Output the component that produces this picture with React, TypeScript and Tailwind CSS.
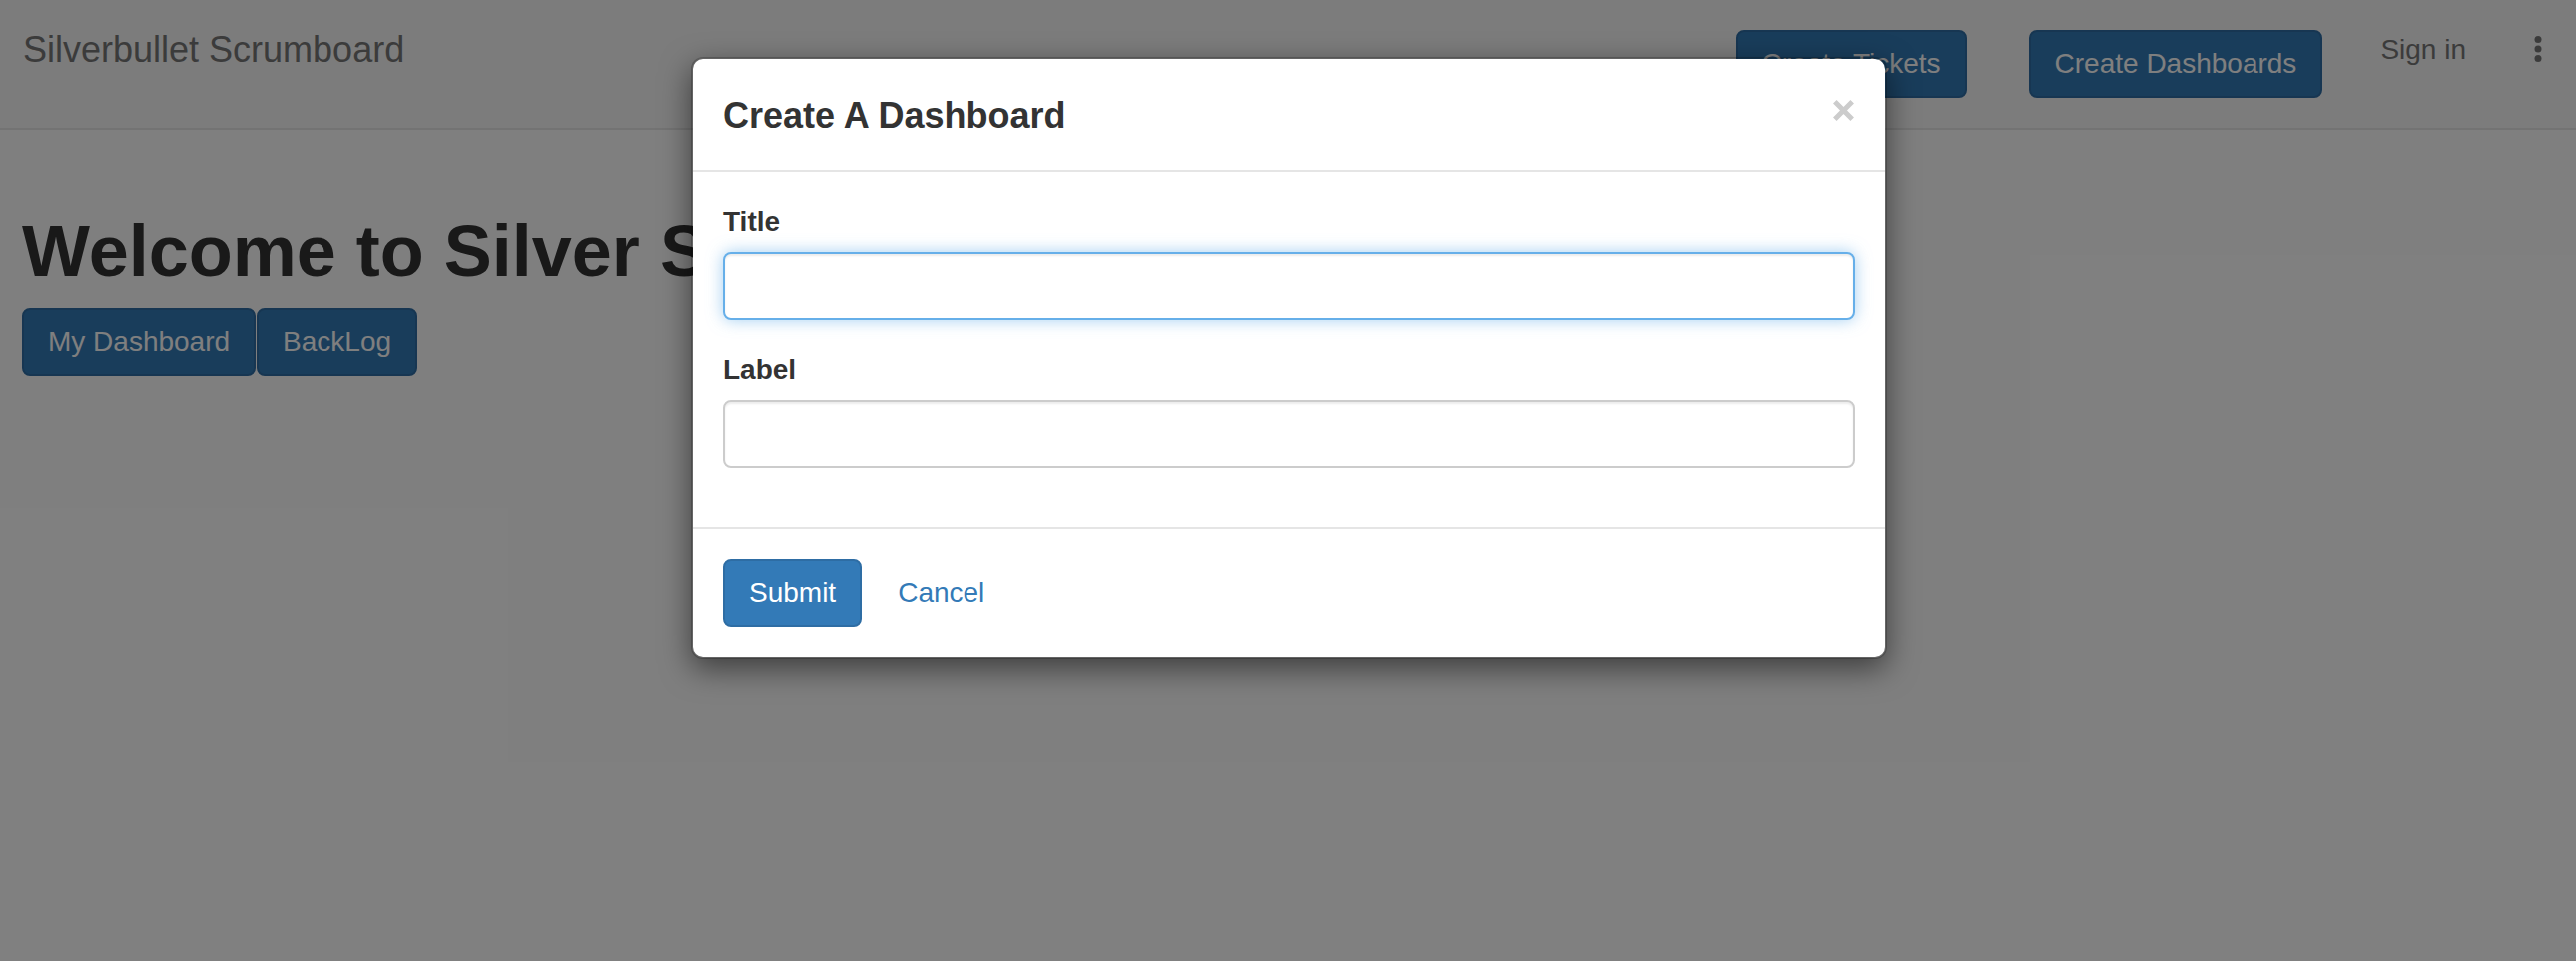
import type { ReactNode } from "react";

function PrimaryButton({ children, className = "" }: { children: ReactNode; className?: string }) {
  return (
    <button
      type="button"
      className={
        "shrink-0 rounded-[8px] border-2 border-[#2e6da4] bg-[#337ab7] px-[24px] py-[12px] text-[28px] leading-[40px] whitespace-nowrap text-white " +
        className
      }
    >
      {children}
    </button>
  );
}

function Field({ label, focused }: { label: string; focused?: boolean }) {
  return (
    <div className="mb-[30px]">
      <label className="mb-[10px] block text-[28px] leading-[40px] font-bold text-[#333]">{label}</label>
      <input
        type="text"
        className={
          focused
            ? "block h-[68px] w-full rounded-[8px] border-2 border-[#66afe9] bg-white px-[24px] text-[28px] outline-none shadow-[inset_0_2px_2px_rgba(0,0,0,0.075),0_0_16px_rgba(102,175,233,0.6)]"
            : "block h-[68px] w-full rounded-[8px] border-2 border-[#cccccc] bg-white px-[24px] text-[28px] outline-none shadow-[inset_0_2px_2px_rgba(0,0,0,0.075)]"
        }
      />
    </div>
  );
}

export default function App() {
  return (
    <div className="relative min-h-[962px] overflow-hidden bg-white font-['Liberation_Sans',Arial,sans-serif] text-[#333]">
      {/* navbar */}
      <nav className="flex h-[130px] items-start justify-between border-b-2 border-[#e7e7e7] bg-[#f8f8f8]">
        <a className="pl-[23px] pt-[30px] text-[36px] leading-[40px] whitespace-nowrap text-[#777]">
          Silverbullet Scrumboard
        </a>
        <div className="flex items-start pt-[30px] pr-[34px]">
          <PrimaryButton>Create Tickets</PrimaryButton>
          <PrimaryButton className="ml-[62px]">Create Dashboards</PrimaryButton>
          <a className="ml-[58px] text-[28px] leading-[40px] whitespace-nowrap text-[#777]">Sign in</a>
          <svg className="ml-[68px] mt-[6px]" width="8" height="26" viewBox="0 0 8 26">
            <circle cx="4" cy="3.5" r="3.5" fill="#777" />
            <circle cx="4" cy="13" r="3.5" fill="#777" />
            <circle cx="4" cy="22.5" r="3.5" fill="#777" />
          </svg>
        </div>
      </nav>

      {/* page content */}
      <section className="px-[22px]">
        <h1 className="mt-[82px] mb-[17px] text-[72px] leading-[79px] font-bold whitespace-nowrap text-[#333]">
          Welcome to Silver Scrumboard
        </h1>
        <div className="flex">
          <PrimaryButton>My Dashboard</PrimaryButton>
          <PrimaryButton className="ml-[1px]">BackLog</PrimaryButton>
        </div>
      </section>

      {/* backdrop */}
      <div className="absolute inset-0 bg-black/50" />

      {/* modal */}
      <div className="absolute inset-0 flex justify-center pt-[57px] pl-[2px]">
        <div className="h-fit w-[1198px] rounded-[12px] border-2 border-black/20 bg-white bg-clip-padding shadow-[0_10px_30px_rgba(0,0,0,0.5)]">
          <div className="flex items-start justify-between border-b-2 border-[#e5e5e5] px-[30px] pt-[31px] pb-[29px]">
            <h4 className="text-[36px] leading-[51px] font-bold text-[#333]">Create A Dashboard</h4>
            <svg className="mt-[10px] mr-[1px]" width="21" height="21" viewBox="0 0 21 21">
              <path d="M1.8 1.8 L19.2 19.2 M19.2 1.8 L1.8 19.2" stroke="#cccccc" strokeWidth="5" />
            </svg>
          </div>

          <div className="px-[30px] pt-[30px] pb-[30px]">
            <Field label="Title" focused />
            <Field label="Label" />
          </div>

          <div className="flex items-start border-t-2 border-[#e5e5e5] p-[30px]">
            <PrimaryButton>Submit</PrimaryButton>
            <button
              type="button"
              className="ml-[10px] rounded-[8px] border-2 border-transparent px-[24px] py-[12px] text-[28px] leading-[40px] text-[#337ab7]"
            >
              Cancel
            </button>
          </div>
        </div>
      </div>
    </div>
  );
}
